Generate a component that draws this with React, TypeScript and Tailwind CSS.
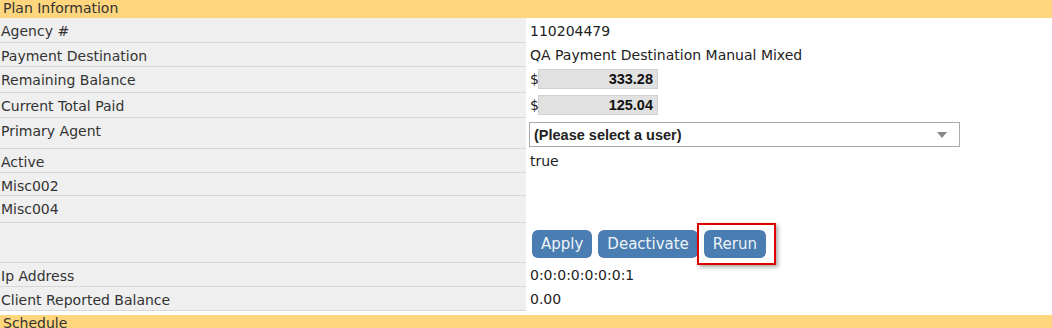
import React from "react";

const LABEL_FONT = { fontFamily: '"DejaVu Sans", Verdana, sans-serif' };
const ARIAL = { fontFamily: '"Liberation Sans", Arial, sans-serif' };

function Row({ label, h, children }: { label: string; h: string; children?: React.ReactNode }) {
  return (
    <div className={`flex ${h}`}>
      <div className="w-[526px] shrink-0 bg-[#efefef] border-b border-[#d8d8d8] pl-[1px] pt-[5px] text-[14px] leading-[16px] text-[#333]">
        {label}
      </div>
      <div className="flex-1 pl-[4px] text-[14px] leading-[16px] text-[#222]">{children}</div>
    </div>
  );
}

function MoneyBox({ value }: { value: string }) {
  return (
    <div className="flex items-center pt-[2px]">
      <span className="w-[8px] text-[14px]">$</span>
      <div
        className="w-[120px] h-[20px] bg-[#e1e1e1] border border-[#d0d0d0] text-right pr-[4px] text-[14.5px] leading-[18px] font-bold text-[#111]"
        style={ARIAL}
      >
        {value}
      </div>
    </div>
  );
}

export default function App() {
  return (
    <div className="w-[1052px] h-[328px] bg-white overflow-hidden" style={LABEL_FONT}>
      <div className="h-[18px] bg-[#ffd67d] pl-[3px] text-[14px] leading-[17px] text-[#333]">Plan Information</div>

      <Row label="Agency #" h="h-[25px]">
        <div className="pt-[5px]">110204479</div>
      </Row>
      <Row label="Payment Destination" h="h-[24px]">
        <div className="pt-[4px]">QA Payment Destination Manual Mixed</div>
      </Row>
      <Row label="Remaining Balance" h="h-[26px]">
        <MoneyBox value="333.28" />
      </Row>
      <Row label="Current Total Paid" h="h-[25px]">
        <MoneyBox value="125.04" />
      </Row>
      <Row label="Primary Agent" h="h-[31px]">
        <div className="pt-[4px] -ml-[1px]">
          <div
            className="w-[431px] h-[25px] border border-[#aaaaaa] bg-white flex items-center justify-between pl-[4px] pr-[12px] font-bold text-[14.5px] text-[#222]"
            style={ARIAL}
          >
            <span>(Please select a user)</span>
            <span className="w-0 h-0 border-l-[5px] border-r-[5px] border-t-[6px] border-l-transparent border-r-transparent border-t-[#888]" />
          </div>
        </div>
      </Row>
      <Row label="Active" h="h-[24px]">
        <div className="pt-[4px]">true</div>
      </Row>
      <Row label="Misc002" h="h-[23px]" />
      <Row label="Misc004" h="h-[27px]" />
      <Row label="" h="h-[40px]">
        <div className="flex items-center gap-[6px] pt-[6px] pl-[2px]">
          <button className="h-[28px] px-[9px] rounded-[6px] bg-[#4a7db1] text-[#eef3f8] text-[15px]">Apply</button>
          <button className="h-[28px] px-[9px] rounded-[6px] bg-[#4a7db1] text-[#eef3f8] text-[15px]">Deactivate</button>
          <div className="-my-[6px] border-2 border-[#e00000] pl-[5px] pr-[8px] py-[5px] shadow-[2px_2px_4px_rgba(0,0,0,0.35)] -ml-[7px]">
            <button className="h-[28px] px-[9px] rounded-[6px] bg-[#4a7db1] text-[#eef3f8] text-[15px]">Rerun</button>
          </div>
        </div>
      </Row>
      <Row label="Ip Address" h="h-[24px]">
        <div className="pt-[4px]">0:0:0:0:0:0:0:1</div>
      </Row>
      <Row label="Client Reported Balance" h="h-[24px]">
        <div className="pt-[4px]">0.00</div>
      </Row>
      <div className="h-[4px]" />
      <div className="h-[18px] bg-[#ffd67d] pl-[3px] text-[14px] leading-[17px] text-[#333]">Schedule</div>
    </div>
  );
}
